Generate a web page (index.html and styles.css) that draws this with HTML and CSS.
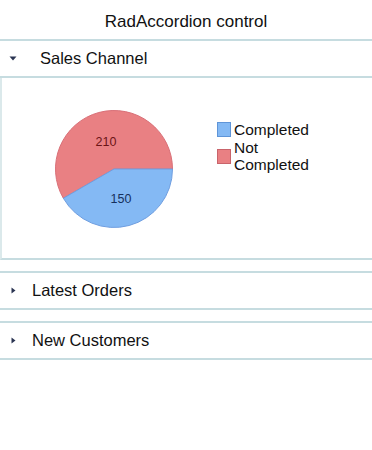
FILE: index.html
```html
<!DOCTYPE html>
<html lang="en">
<head>
  <meta charset="UTF-8" />
  <meta name="viewport" content="width=device-width, initial-scale=1.0"/>
  <title>RadAccordion control</title>
  <link rel="stylesheet" href="styles.css">
</head>
<body>
  <header class="title-bar">RadAccordion control</header>

  <div class="accordion">
    <div class="acc-item">
      <div class="acc-header expanded">
        <svg class="acc-icon" width="8" height="5" viewBox="0 0 8 5">
          <path d="M0.5 0.5 L7.5 0.5 L4 4.5 Z" fill="#2b3552"/>
        </svg>
        <span class="acc-title">Sales Channel</span>
      </div>
      <div class="acc-content">
        <svg class="pie" width="120" height="120" viewBox="0 0 120 120">
          <path d="M60 60 L9.34 89.25 A58.5 58.5 0 1 1 118.5 60 Z" fill="#e98083" stroke="#d97078" stroke-width="1"/>
          <path d="M60 60 L118.5 60 A58.5 58.5 0 0 1 9.34 89.25 Z" fill="#84b9f4" stroke="#6f9ee0" stroke-width="1"/>
          <text x="52" y="37" class="pie-label red-label">210</text>
          <text x="67" y="94" class="pie-label blue-label">150</text>
        </svg>
        <ul class="legend">
          <li class="legend-item">
            <span class="swatch swatch-blue"></span>
            <span class="legend-text">Completed</span>
          </li>
          <li class="legend-item">
            <span class="swatch swatch-red"></span>
            <span class="legend-text">Not Completed</span>
          </li>
        </ul>
      </div>
    </div>

    <div class="acc-item">
      <div class="acc-header collapsed">
        <svg class="acc-icon" width="5" height="7" viewBox="0 0 5 7">
          <path d="M0.5 0.5 L4.5 3.5 L0.5 6.5 Z" fill="#2b3552"/>
        </svg>
        <span class="acc-title">Latest Orders</span>
      </div>
    </div>

    <div class="acc-item">
      <div class="acc-header collapsed">
        <svg class="acc-icon" width="5" height="7" viewBox="0 0 5 7">
          <path d="M0.5 0.5 L4.5 3.5 L0.5 6.5 Z" fill="#2b3552"/>
        </svg>
        <span class="acc-title">New Customers</span>
      </div>
    </div>
  </div>
</body>
</html>
```

FILE: styles.css
```css
* { margin: 0; padding: 0; box-sizing: border-box; }
html, body {
  height: 100%;
  background: #fff;
  font-family: "Liberation Sans", Arial, sans-serif;
  color: #111;
  overflow: hidden;
}

.title-bar {
  height: 39px;
  padding-top: 4px;
  line-height: 35px;
  font-size: 17px;
  text-align: center;
}

.accordion {
  display: flex;
  flex-direction: column;
  gap: 11px;
}

.acc-header {
  display: flex;
  align-items: center;
  height: 39px;
  border-top: 2px solid #c6dce0;
  border-bottom: 2px solid #c6dce0;
  font-size: 16.5px;
}

.acc-icon {
  flex: none;
  display: block;
}

.expanded .acc-icon { margin-left: 9px; }
.expanded .acc-title { margin-left: 23px; }

.collapsed .acc-icon { margin-left: 11px; }
.collapsed .acc-title { margin-left: 16px; }

.acc-content {
  display: flex;
  align-items: flex-start;
  height: 182px;
  padding-top: 31px;
  border-left: 2px solid #dbe9eb;
  border-bottom: 2px solid #c6dce0;
}

.pie {
  display: block;
  margin-left: 52px;
  flex: none;
}

.pie-label {
  font-family: "Liberation Sans", Arial, sans-serif;
  font-size: 12.5px;
  text-anchor: middle;
}

.red-label { fill: #6b1416; }
.blue-label { fill: #16305c; }

.legend {
  list-style: none;
  margin-left: 43px;
  margin-top: 12px;
}

.legend-item {
  display: flex;
  align-items: center;
}

.swatch {
  flex: none;
  width: 14px;
  height: 15px;
  margin-right: 3px;
}

.swatch-blue {
  background: #84b9f4;
  border: 1px solid #5f95d8;
}

.swatch-red {
  background: #e98083;
  border: 1px solid #c9646b;
}

.legend-text {
  font-size: 15.5px;
  line-height: 17.5px;
  width: 80px;
}
```
